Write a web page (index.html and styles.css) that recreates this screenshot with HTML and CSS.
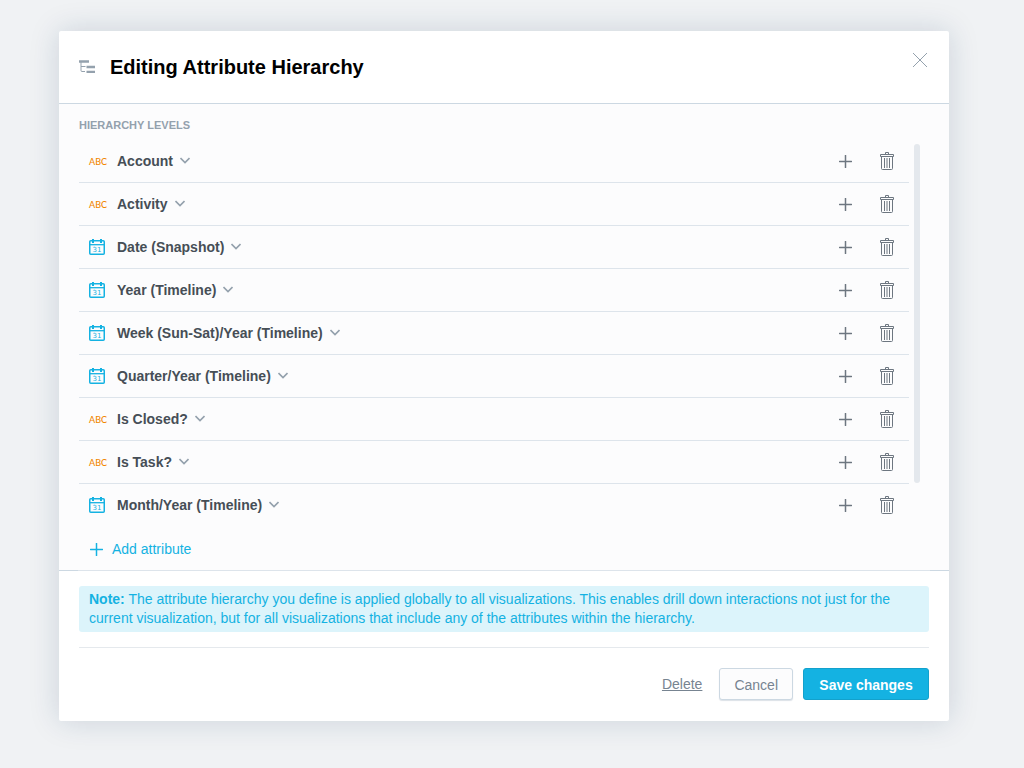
FILE: index.html
```html
<!DOCTYPE html>
<html lang="en">
<head>
<meta charset="utf-8">
<title>Editing Attribute Hierarchy</title>
<link rel="stylesheet" href="styles.css">
</head>
<body>
<svg class="sprite" aria-hidden="true">
  <symbol id="calendar" viewBox="0 0 18 18">
    <rect x=".75" y="2.75" width="14.5" height="13.5" rx="1" fill="none" stroke="currentColor" stroke-width="1.5"/>
    <path d="M1 6.700h14" stroke="currentColor" stroke-width="1.300"/>
    <path d="M4 1v4M12 1v4" stroke="currentColor" stroke-width="2"/>
    <text x="8" y="14" text-anchor="middle" class="calendar-day">31</text>
  </symbol>
  <symbol id="chevron" viewBox="0 0 10 8"><path d="M.5 1 5 5.600l4.500-4.600" fill="none" stroke="currentColor" stroke-width="1.600"/></symbol>
  <symbol id="plus" viewBox="0 0 13 13"><path d="M6.500.5v12M.5 6.500h12" stroke="currentColor" stroke-width="1.500" stroke-linecap="round"/></symbol>
  <symbol id="trash" viewBox="0 0 14 18">
    <g fill="none" stroke="currentColor">
      <path d="M.5 4.500v-2h13v2zM5.500 2.500v-2h3v2M1.500 4.500v12q0 1 1 1h9q1 0 1-1v-12"/>
      <path d="M4.500 6v10M7 6v10M9.500 6v10"/>
    </g>
  </symbol>
</svg>
<main class="page">
  <section class="dialog" role="dialog" aria-labelledby="dialog-title">
    <header class="dialog-header">
      <svg class="tree-icon" viewBox="0 0 16 14" aria-hidden="true"><path d="M0 1.500h10M7.500 7h8.500M7.500 11.800h8.500" stroke="currentColor" stroke-width="2.300" fill="none"/><path d="M2 2v8.500q0 1 1 1h3M2 6.500h4.500" stroke="currentColor" fill="none"/></svg>
      <h1 class="dialog-title" id="dialog-title">Editing Attribute Hierarchy</h1>
      <button class="icon-button close" type="button" aria-label="Close"><svg width="14" height="14" viewBox="0 0 14 14"><path d="m0 0 14 14M14 0 0 14" stroke="currentColor"/></svg></button>
    </header>
    <div class="dialog-body">
      <h2 class="label">HIERARCHY LEVELS</h2>
      <div class="scroller">
        <ul class="levels">
          <li class="level"><span class="type text-type">ABC</span><button class="name" type="button">Account<svg class="chevron"><use href="#chevron"/></svg></button><button class="icon-button" type="button" aria-label="Add level"><svg class="plus"><use href="#plus"/></svg></button><button class="icon-button" type="button" aria-label="Remove level"><svg class="trash"><use href="#trash"/></svg></button></li>
          <li class="level"><span class="type text-type">ABC</span><button class="name" type="button">Activity<svg class="chevron"><use href="#chevron"/></svg></button><button class="icon-button" type="button" aria-label="Add level"><svg class="plus"><use href="#plus"/></svg></button><button class="icon-button" type="button" aria-label="Remove level"><svg class="trash"><use href="#trash"/></svg></button></li>
          <li class="level"><svg class="type date-type"><use href="#calendar"/></svg><button class="name" type="button">Date (Snapshot)<svg class="chevron"><use href="#chevron"/></svg></button><button class="icon-button" type="button" aria-label="Add level"><svg class="plus"><use href="#plus"/></svg></button><button class="icon-button" type="button" aria-label="Remove level"><svg class="trash"><use href="#trash"/></svg></button></li>
          <li class="level"><svg class="type date-type"><use href="#calendar"/></svg><button class="name" type="button">Year (Timeline)<svg class="chevron"><use href="#chevron"/></svg></button><button class="icon-button" type="button" aria-label="Add level"><svg class="plus"><use href="#plus"/></svg></button><button class="icon-button" type="button" aria-label="Remove level"><svg class="trash"><use href="#trash"/></svg></button></li>
          <li class="level"><svg class="type date-type"><use href="#calendar"/></svg><button class="name" type="button">Week (Sun-Sat)/Year (Timeline)<svg class="chevron"><use href="#chevron"/></svg></button><button class="icon-button" type="button" aria-label="Add level"><svg class="plus"><use href="#plus"/></svg></button><button class="icon-button" type="button" aria-label="Remove level"><svg class="trash"><use href="#trash"/></svg></button></li>
          <li class="level"><svg class="type date-type"><use href="#calendar"/></svg><button class="name" type="button">Quarter/Year (Timeline)<svg class="chevron"><use href="#chevron"/></svg></button><button class="icon-button" type="button" aria-label="Add level"><svg class="plus"><use href="#plus"/></svg></button><button class="icon-button" type="button" aria-label="Remove level"><svg class="trash"><use href="#trash"/></svg></button></li>
          <li class="level"><span class="type text-type">ABC</span><button class="name" type="button">Is Closed?<svg class="chevron"><use href="#chevron"/></svg></button><button class="icon-button" type="button" aria-label="Add level"><svg class="plus"><use href="#plus"/></svg></button><button class="icon-button" type="button" aria-label="Remove level"><svg class="trash"><use href="#trash"/></svg></button></li>
          <li class="level"><span class="type text-type">ABC</span><button class="name" type="button">Is Task?<svg class="chevron"><use href="#chevron"/></svg></button><button class="icon-button" type="button" aria-label="Add level"><svg class="plus"><use href="#plus"/></svg></button><button class="icon-button" type="button" aria-label="Remove level"><svg class="trash"><use href="#trash"/></svg></button></li>
          <li class="level"><svg class="type date-type"><use href="#calendar"/></svg><button class="name" type="button">Month/Year (Timeline)<svg class="chevron"><use href="#chevron"/></svg></button><button class="icon-button" type="button" aria-label="Add level"><svg class="plus"><use href="#plus"/></svg></button><button class="icon-button" type="button" aria-label="Remove level"><svg class="trash"><use href="#trash"/></svg></button></li>
        </ul>
        <div class="scroll-track"><div class="scroll-thumb"></div></div>
      </div>
      <button class="add" type="button"><svg class="plus"><use href="#plus"/></svg>Add attribute</button>
    </div>
    <footer class="dialog-footer">
      <p class="note"><strong>Note:</strong> The attribute hierarchy you define is applied globally to all visualizations. This enables drill down interactions not just for the current visualization, but for all visualizations that include any of the attributes within the hierarchy.</p>
      <div class="actions">
        <a class="delete" href="#">Delete</a>
        <button class="button" type="button">Cancel</button>
        <button class="button primary" type="button">Save changes</button>
      </div>
    </footer>
  </section>
</main>
</body>
</html>
```
FILE: styles.css
```css
* { box-sizing: border-box; }
body {
  margin: 0;
  background: #f0f2f4;
  color: #464e56;
  font: 14px/19px "Liberation Sans", Arial, sans-serif;
  text-rendering: optimizeSpeed;
}
button { font: inherit; color: inherit; cursor: pointer; text-rendering: inherit; }
svg { display: block; flex: none; }
.sprite { display: none; }
.page { padding: 31px 75px 47px 59px; }
.dialog {
  max-width: 890px;
  margin: 0 auto;
  background: #fff;
  border-radius: 2px;
  box-shadow: 0 0 30px rgba(20, 56, 93, .17);
}
.dialog-header {
  display: flex;
  align-items: center;
  min-height: 73px;
  padding: 0 22px 0 20px;
  border-bottom: 1px solid #ccd8e2;
}
.tree-icon { width: 16px; height: 14px; color: #94a1ad; }
.dialog-title {
  flex: 1;
  margin: 0 0 0 15px;
  color: #000;
  font-size: 20px;
  line-height: 24px;
}
.icon-button { padding: 0; border: 0; background: none; color: #6d7680; }
.close { align-self: flex-start; margin-top: 22px; color: #94a1ad; }
.dialog-body {
  padding: 14px 29px 3px 20px;
  background: #fcfcfd;
  border-bottom: 1px solid #dde4eb;
  border-image: linear-gradient(to right, #ccd8e2 20px, #dde4eb 20px, #dde4eb calc(100% - 20px), #ccd8e2 calc(100% - 20px)) 1;
}
.label {
  margin: 0 0 8px;
  color: #94a1ad;
  font-size: 11px;
  line-height: 14px;
}
.scroller { display: flex; gap: 5px; }
.levels { flex: 1; margin: 0; padding: 0; list-style: none; }
.level {
  display: flex;
  align-items: center;
  height: 43px;
  padding: 0 15px 0 10px;
  border-bottom: 1px solid #dde4eb;
}
.level:last-child { border-color: transparent; }
.type { width: 18px; height: 18px; margin-right: 10px; }
.text-type { color: #f18600; font: 500 9px/20px Lato, sans-serif; }
.date-type { color: #14b2e2; }
.calendar-day { fill: currentColor; font: 7px "DejaVu Sans", sans-serif; }
.name {
  display: flex;
  align-items: center;
  gap: 7px;
  margin-right: auto;
  padding: 0;
  border: 0;
  background: none;
  font-weight: bold;
}
.chevron { width: 10px; height: 8px; color: #94a1ad; }
.plus { width: 13px; height: 13px; }
.trash { width: 14px; height: 18px; margin-left: 28px; }
.scroll-track { width: 6px; padding-top: 4px; }
.scroll-thumb { height: 339px; border-radius: 3px; background: #e4e8ed; }
.add {
  display: flex;
  align-items: center;
  gap: 9px;
  height: 35px;
  margin-top: 5px;
  padding: 0 11px;
  border: 0;
  background: none;
  color: #14b2e2;
}
.dialog-footer { padding: 15px 20px 21px; }
.note {
  margin: 0 0 15px;
  padding: 4px 10px;
  border-radius: 3px;
  background: #dcf4fb;
  color: #14b2e2;
}
.actions {
  display: flex;
  align-items: center;
  justify-content: flex-end;
  gap: 10px;
  padding-top: 20px;
  border-top: 1px solid #e5e9ed;
}
.delete { margin-right: 7px; color: #778491; }
.button {
  height: 32px;
  padding: 2px 14px 0;
  border: 1px solid #ccd8e2;
  border-radius: 3px;
  background: #fcfcfd;
  box-shadow: 0 1px 1px rgba(20, 56, 93, .15);
  color: #778491;
}
.primary {
  min-width: 126px;
  border-color: #13a1cc;
  background: #14b2e2;
  box-shadow: none;
  color: #fff;
  font-weight: bold;
}
```
